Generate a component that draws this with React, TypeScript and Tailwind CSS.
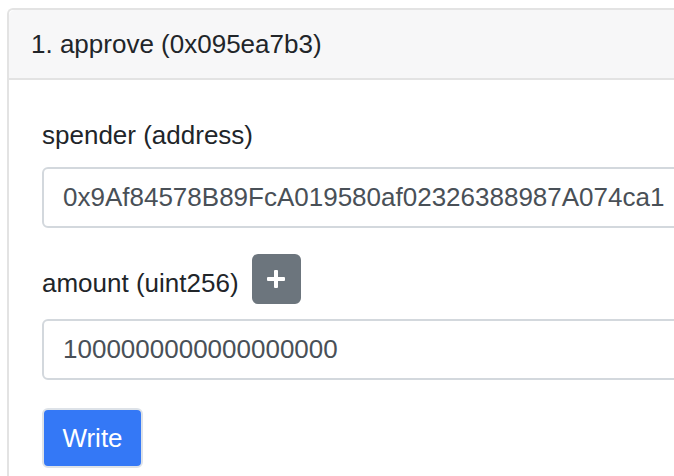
import React from 'react';

const font = { fontFamily: '"Liberation Sans", Arial, sans-serif' };

function PlusIcon() {
  return (
    <svg width="18" height="18" viewBox="0 0 18 18" fill="#ffffff">
      <rect x="7" y="0" width="4" height="18" rx="1" />
      <rect x="0" y="7" width="18" height="4" rx="1" />
    </svg>
  );
}

function Field({ value }: { value: string }) {
  return (
    <div className="h-[61px] w-[700px] flex items-center rounded-[6px] border-2 border-[#d3d8dd] bg-white pl-[19px] text-[26px] text-[#495057]">
      {value}
    </div>
  );
}

export default function App() {
  return (
    <div className="w-[674px] h-[476px] overflow-hidden bg-white text-[#212529]" style={font}>
      <div className="mt-[8px] ml-[7px] w-[720px] rounded-tl-[6px] border-2 border-r-0 border-[#e3e3e3]">
        <div className="h-[70px] flex items-center px-[22px] bg-[#f7f7f8] border-b-2 border-[#e3e3e3] text-[26px] rounded-tl-[6px]">
          1. approve (0x095ea7b3)
        </div>
        <div className="pl-[33px] pt-[36px] pb-[20px]">
          <div className="text-[26px] leading-[38px] mb-[13px]">spender (address)</div>
          <Field value="0x9Af84578B89FcA019580af02326388987A074ca1" />

          <div className="mt-[26px] mb-[15px] h-[50px] flex items-start">
            <span className="mt-[10px] text-[26px] leading-[38px]">amount (uint256)</span>
            <button
              type="button"
              className="ml-[13px] w-[49px] h-[50px] rounded-[6px] bg-[#6c757d] flex items-center justify-center"
            >
              <PlusIcon />
            </button>
          </div>
          <Field value="1000000000000000000" />

          <button
            type="button"
            className="mt-[28px] w-[101px] h-[60px] rounded-[6px] bg-[#3478f6] border-2 border-[#dde2e8] text-white text-[26px] flex items-center justify-center"
            style={font}
          >
            Write
          </button>
        </div>
      </div>
    </div>
  );
}
